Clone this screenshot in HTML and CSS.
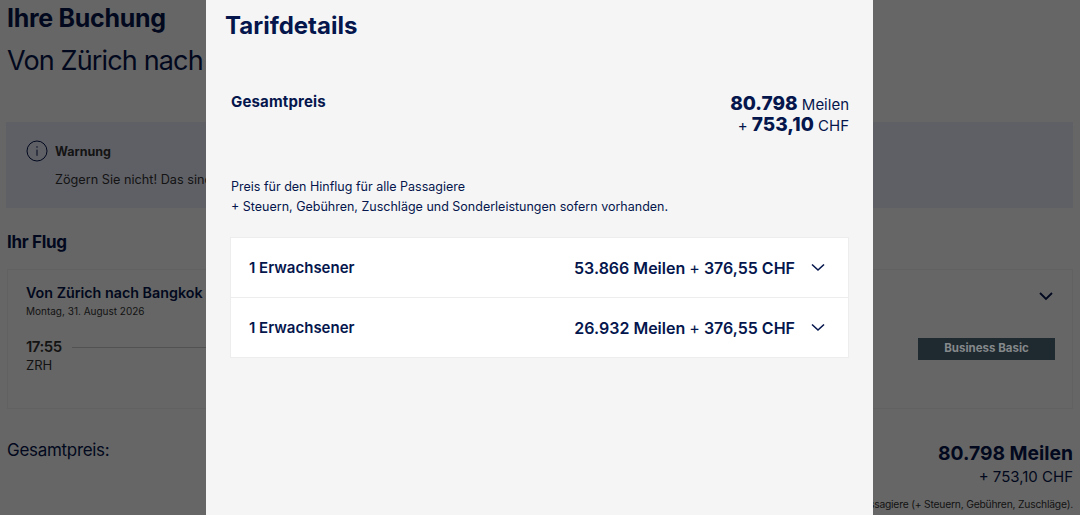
FILE: index.html
```html
<!DOCTYPE html>
<html lang="de">
<head>
    <meta charset="UTF-8">
    <title>Ihre Buchung</title>
    <link rel="stylesheet" href="styles.css">
</head>
<body>
    <div class="page">
        <h1 class="page-title">Ihre Buchung</h1>
        <div class="page-route">Von Zürich nach Bangkok</div>

        <div class="warning">
            <div class="warning-head">
                <svg class="warning-icon" viewBox="0 0 22 22" width="22" height="22" fill="none" stroke="#05164d" stroke-width="1">
                    <circle cx="11" cy="11" r="10"/>
                    <path d="M11 9.6v6.2M11 6.2v1.6"/>
                </svg>
                <strong>Warnung</strong>
            </div>
            <p>Zögern Sie nicht! Das sind</p>
        </div>

        <h2 class="section-title">Ihr Flug</h2>
        <div class="flight-card">
            <div class="flight-main">
                <div class="flight-name">Von Zürich nach Bangkok</div>
                <div class="flight-date">Montag, 31. August 2026</div>
                <div class="flight-time">
                    <span>17:55</span>
                    <i class="flight-line"></i>
                </div>
                <div class="flight-code">ZRH</div>
            </div>
            <div class="flight-side">
                <svg class="flight-chevron" viewBox="0 0 14 9" width="14" height="9" fill="none" stroke="#05164d" stroke-width="1.8">
                    <path d="M1 1l6 6 6-6"/>
                </svg>
                <div class="fare-badge">Business Basic</div>
            </div>
        </div>

        <div class="total">
            <div class="total-label">Gesamtpreis:</div>
            <div class="total-values">
                <div class="total-miles">80.798 Meilen</div>
                <div class="total-cash">+ 753,10 CHF</div>
                <div class="total-note">Preis für alle Passagiere (+ Steuern, Gebühren, Zuschläge).</div>
            </div>
        </div>
    </div>

    <div class="overlay"></div>

    <div class="modal">
        <h2 class="modal-title">Tarifdetails</h2>
        <div class="modal-body">
            <div class="price-head">
                <div class="price-label">Gesamtpreis</div>
                <div class="price-values">
                    <div><b>80.798</b> Meilen</div>
                    <div>+ <b>753,10</b> CHF</div>
                </div>
            </div>
            <p class="price-note">
                Preis für den Hinflug für alle Passagiere<br>
                + Steuern, Gebühren, Zuschläge und Sonderleistungen sofern vorhanden.
            </p>
            <div class="pax-list">
                <div class="pax-row">
                    <span class="pax-name">1 Erwachsener</span>
                    <span class="pax-price">53.866 Meilen <em>+</em> 376,55 CHF</span>
                    <svg viewBox="0 0 14 9" width="14" height="9" fill="none" stroke="#05164d" stroke-width="1.6">
                        <path d="M1 1.5l6 5.5 6-5.5"/>
                    </svg>
                </div>
                <div class="pax-row">
                    <span class="pax-name">1 Erwachsener</span>
                    <span class="pax-price">26.932 Meilen <em>+</em> 376,55 CHF</span>
                    <svg viewBox="0 0 14 9" width="14" height="9" fill="none" stroke="#05164d" stroke-width="1.6">
                        <path d="M1 1.5l6 5.5 6-5.5"/>
                    </svg>
                </div>
            </div>
        </div>
    </div>
</body>
</html>
```

FILE: styles.css
```css
/* Basic Reset & Body */
* {
    box-sizing: border-box;
    margin: 0;
    padding: 0;
}

html,
body {
    height: 515px;
    overflow: hidden;
}

body {
    font-family: Inter, "Liberation Sans", sans-serif;
    background: #fff;
    color: #05164d;
}

/* Page behind the dialog */
.page {
    padding: 5px 7px 0 7px;
}

.page-title {
    font-size: 25px;
    line-height: 26px;
    font-weight: 700;
    letter-spacing: -0.3px;
}

.page-route {
    font-size: 27px;
    line-height: 36px;
    margin-top: 12px;
    letter-spacing: -0.85px;
    white-space: nowrap;
}

.warning {
    margin: 43px 0 0 -1px;
    height: 86px;
    background: #edf0ff;
    padding: 18px 20px;
    color: #333;
}

.warning-head {
    display: flex;
    align-items: center;
    gap: 7px;
    font-size: 12.5px;
}

.warning p {
    font-size: 12.7px;
    margin: 10px 0 0 29px;
}

.section-title {
    font-size: 17px;
    line-height: 24px;
    font-weight: 700;
    letter-spacing: -0.3px;
    margin-top: 22px;
}

.flight-card {
    display: flex;
    justify-content: space-between;
    margin-top: 15px;
    height: 140px;
    background: #fff;
    border: 1px solid #f2f2f2;
    padding: 13px 18px;
}

.flight-name {
    font-size: 14.3px;
    line-height: 20px;
    font-weight: 600;
}

.flight-date {
    font-size: 10px;
    line-height: 15px;
    color: #333;
    margin-top: 1px;
}

.flight-time {
    display: flex;
    align-items: center;
    gap: 10px;
    margin-top: 18px;
    font-size: 15px;
    line-height: 20px;
    font-weight: 600;
    letter-spacing: -0.5px;
    color: #333;
}

.flight-line {
    width: 500px;
    border-top: 1px solid #ccc;
}

.flight-code {
    font-size: 13px;
    line-height: 16px;
    color: #333;
}

.flight-side {
    display: flex;
    flex-direction: column;
    align-items: flex-end;
}

.flight-chevron {
    margin: 9px 1px 0 0;
}

.fare-badge {
    position: relative;
    z-index: 2;
    width: 137px;
    height: 22px;
    margin: 37px -1px 0 0;
    background: #1f2a30;
    color: #84888b;
    font-size: 11.5px;
    line-height: 20px;
    font-weight: 700;
    text-align: center;
}

.total {
    display: flex;
    justify-content: space-between;
    margin-top: 29px;
}

.total-label {
    font-size: 17px;
    line-height: 24px;
    letter-spacing: -0.3px;
}

.total-values {
    padding-top: 3px;
    text-align: right;
}

.total-miles {
    font-size: 19.3px;
    line-height: 24px;
    font-weight: 700;
}

.total-cash {
    font-size: 15px;
    line-height: 24px;
}

.total-note {
    font-size: 10.3px;
    line-height: 14px;
    letter-spacing: -0.2px;
    color: #333;
    margin-top: 8px;
}

/* Dialog */
.overlay {
    position: fixed;
    inset: 0;
    z-index: 1;
    background: rgba(0, 0, 0, 0.6);
}

.modal {
    position: fixed;
    top: 0;
    bottom: 0;
    left: 206px;
    z-index: 3;
    width: 667px;
    background: #f5f5f5;
}

.modal-title {
    font-size: 24px;
    line-height: 30px;
    font-weight: 700;
    padding: 11px 0 0 19px;
}

.modal-body {
    padding: 0 24px;
}

.price-head {
    display: flex;
    justify-content: space-between;
    margin-top: 53px;
}

.price-label {
    font-size: 15px;
    line-height: 16px;
    font-weight: 700;
    letter-spacing: 0.15px;
    padding-left: 1px;
}

.price-values {
    text-align: right;
    font-size: 15px;
    line-height: 21px;
}

.price-values b {
    font-size: 19px;
    line-height: 1;
    font-weight: 800;
}

.price-note {
    font-size: 12.5px;
    line-height: 20px;
    margin-top: 41px;
    padding-left: 1px;
}

.pax-list {
    margin-top: 20px;
    background: #fff;
    border: 1px solid #ededed;
}

.pax-row {
    display: flex;
    align-items: center;
    height: 59px;
    padding: 0 23px 0 18px;
    font-size: 15px;
    font-weight: 600;
}

.pax-row + .pax-row {
    height: 60px;
    border-top: 1px solid #ededed;
}

.pax-name {
    flex: 1;
}

.pax-price {
    font-size: 16px;
}

.pax-price em {
    font-style: normal;
    font-weight: 400;
}

.pax-row svg {
    margin-left: 16px;
}
```
